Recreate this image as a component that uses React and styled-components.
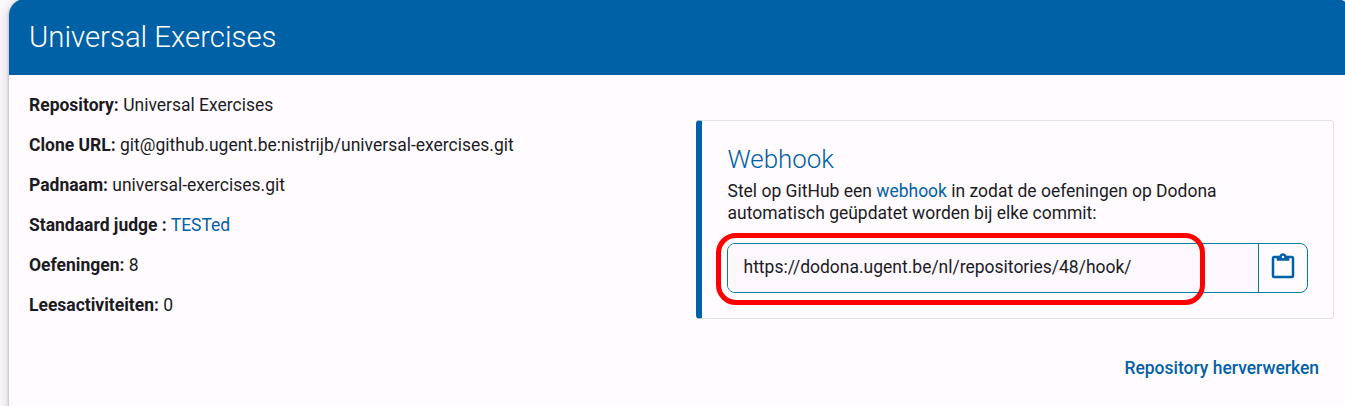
import React from "react";
import styled, { createGlobalStyle } from "styled-components";

const Global = createGlobalStyle`
  * { box-sizing: border-box; }
  html, body { margin: 0; height: 406px; overflow: hidden; background: #faf6fc; }
  body { font-family: Roboto, sans-serif; font-size: 17.49px; line-height: 22px; color: #1b1b1f; }
`;
const Page = styled.div`
  height: 406px;
  overflow: hidden;
  padding-left: 9px;
`;
const Card = styled.section`
  width: 1343px;
  height: 440px;
  margin-top: -1px;
  border-radius: 16px;
  background: #fffbff;
  overflow: hidden;
  box-shadow: 0 1px 3px rgba(0, 0, 0, 0.3), 0 4px 9px 3px rgba(0, 0, 0, 0.1);
`;
const Header = styled.header`
  height: 76px;
  padding: 20px 20px 0;
  background: #0061a6;
`;
const Title = styled.h1`
  margin: 0;
  font-size: 29.35px;
  line-height: 36px;
  font-weight: 300;
  color: #fff;
`;
const Body = styled.div`
  display: flex;
  justify-content: space-between;
  padding: 19px 18px 0 20px;
`;
const Details = styled.div`
  display: flex;
  flex-direction: column;
  gap: 18px;
`;
const Detail = styled.p`
  margin: 0;
  white-space: nowrap;
`;
const Label = styled.b`
  font-weight: 700;
`;
const Link = styled.a`
  color: #0061a6;
`;
const Callout = styled.aside`
  width: 638px;
  height: 199px;
  margin-top: 26px;
  padding: 24px 25px 0;
  border: 1px solid #e3dfe5;
  border-left: 6px solid #0061a6;
  border-radius: 4px;
`;
const CalloutTitle = styled.h2`
  margin: 0 0 6px;
  padding-left: 0.5px;
  font-size: 25.9px;
  line-height: 29px;
  font-weight: 300;
  color: #0061a6;
`;
const CalloutText = styled.p`
  margin: 0 0 19px;
  padding-left: 0.5px;
  white-space: nowrap;
`;
const InputGroup = styled.div`
  position: relative;
  display: flex;
  width: 581px;
  height: 50px;
  border: 1px solid #007fa3;
  border-radius: 8px;
`;
const UrlField = styled.div`
  flex: 1;
  padding: 12px 15.5px;
  background: #fcf8fe;
  border-radius: 7px 0 0 7px;
`;
const CopyButton = styled.button`
  display: flex;
  align-items: flex-start;
  justify-content: center;
  width: 49px;
  padding: 7.75px 0 0;
  border: 0;
  border-left: 1px solid #007fa3;
  background: none;
  color: #0061a6;
`;
const Highlight = styled.div`
  position: absolute;
  left: -12.5px;
  top: -11px;
  width: 489px;
  height: 72px;
  border: 5px solid #ff0000;
  border-radius: 20px;
`;
const Actions = styled.footer`
  display: flex;
  justify-content: flex-end;
  padding: 38px 33px 0 0;
  font-weight: 500;
`;

const ClipboardIcon = () => (
  <svg width="30" height="30" viewBox="0 0 24 24" fill="currentColor">
    <path d="M19,3H14.82C14.4,1.84 13.3,1 12,1C10.7,1 9.6,1.84 9.18,3H5A2,2 0 0,0 3,5V19A2,2 0 0,0 5,21H19A2,2 0 0,0 21,19V5A2,2 0 0,0 19,3M12,3A1,1 0 0,1 13,4A1,1 0 0,1 12,5A1,1 0 0,1 11,4A1,1 0 0,1 12,3M7,7H17V5H19V19H5V5H7V7Z" />
  </svg>
);

const details = [
  ["Repository:", "Universal Exercises"],
  ["Clone URL:", "git@github.ugent.be:nistrijb/universal-exercises.git"],
  ["Padnaam:", "universal-exercises.git"],
  ["Standaard judge :", <Link key="judge">TESTed</Link>],
  ["Oefeningen:", "8"],
  ["Leesactiviteiten:", "0"],
];

export default function App() {
  return (
    <Page>
      <Global />
      <Card>
        <Header>
          <Title>Universal Exercises</Title>
        </Header>
        <Body>
          <Details>
            {details.map(([label, value]) => (
              <Detail key={label}>
                <Label>{label}</Label> {value}
              </Detail>
            ))}
          </Details>
          <Callout>
            <CalloutTitle>Webhook</CalloutTitle>
            <CalloutText>
              Stel op GitHub een <Link>webhook</Link> in zodat de oefeningen op Dodona
              <br />
              automatisch geüpdatet worden bij elke commit:
            </CalloutText>
            <InputGroup>
              <UrlField>https://dodona.ugent.be/nl/repositories/48/hook/</UrlField>
              <CopyButton aria-label="Kopiëren">
                <ClipboardIcon />
              </CopyButton>
              <Highlight />
            </InputGroup>
          </Callout>
        </Body>
        <Actions>
          <Link>Repository herverwerken</Link>
        </Actions>
      </Card>
    </Page>
  );
}
